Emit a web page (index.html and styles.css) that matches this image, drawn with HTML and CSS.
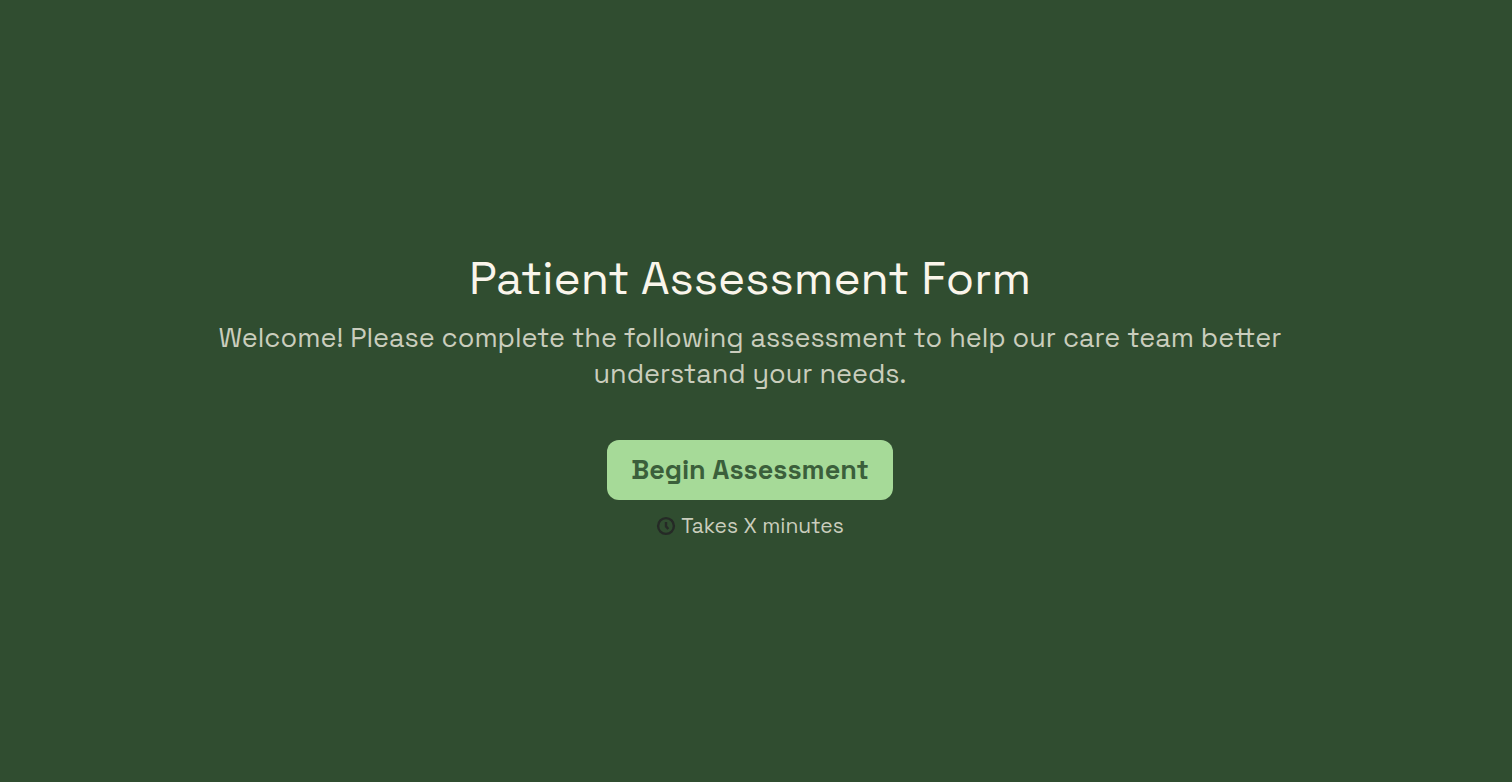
FILE: index.html
```html
<!DOCTYPE html>
<html lang="en">
<head>
    <meta charset="UTF-8">
    <meta name="viewport" content="width=device-width, initial-scale=1.0">
    <title>Patient Assessment Form</title>
    <link rel="stylesheet" href="styles.css">
</head>
<body>
    <main class="welcome">
        <h1 class="welcome-title">Patient Assessment Form</h1>
        <p class="welcome-text">Welcome! Please complete the following assessment to help our care team better understand your needs.</p>
        <button type="button" class="begin-button">Begin Assessment</button>
        <div class="duration">
            <svg class="clock-icon" viewBox="0 0 20 20" aria-hidden="true">
                <circle cx="10" cy="10" r="7.9"/>
                <path d="M10 6v4.4l2.3 2.6"/>
            </svg>
            <span>Takes X minutes</span>
        </div>
    </main>
</body>
</html>
```
FILE: styles.css
```css
body {
    margin: 0;
    background-color: #304d30;
    font-family: "Space Grotesk", Inter, sans-serif;
}

.welcome {
    box-sizing: border-box;
    min-height: 100vh;
    padding: 16px 212px 10px 200px;
    display: flex;
    flex-direction: column;
    align-items: center;
    justify-content: center;
    text-align: center;
}

.welcome-title {
    margin: 0;
    color: #faf5eb;
    font-size: 46px;
    font-weight: 400;
    line-height: 60px;
}

.welcome-text {
    margin: 12px 0 48px;
    color: #cacdbd;
    font-size: 27px;
    line-height: 36px;
}

.begin-button {
    padding: 12px 24px;
    border: none;
    border-radius: 12px;
    background-color: #a6da98;
    color: #3b5f3b;
    font-family: inherit;
    font-size: 27px;
    font-weight: 700;
    line-height: 36px;
    cursor: pointer;
}

.duration {
    margin-top: 12px;
    display: flex;
    align-items: center;
    gap: 5px;
    color: #cacdbd;
    font-size: 21px;
    line-height: 28px;
}

.clock-icon {
    width: 20px;
    height: 20px;
    fill: none;
    stroke: #252a26;
    stroke-width: 2.4;
    stroke-linecap: butt;
    stroke-linejoin: round;
}
```
